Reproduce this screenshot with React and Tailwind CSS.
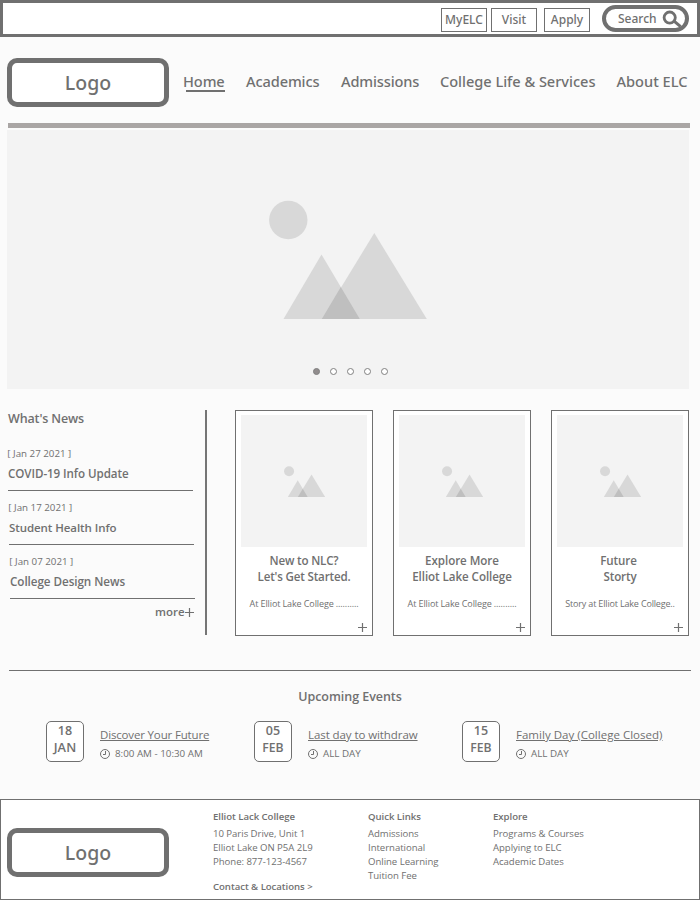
function Landscape({ className }) {
  return (
    <svg viewBox="269 200 158 119" className={className}>
      <circle cx="288.3" cy="220" r="19.2" fill="#d8d8d8" />
      <path d="M321.5 254.5 359.8 319H283.5Z" fill="#d8d8d8" />
      <path d="M374.3 233 426.8 319H321.8Z" fill="#d8d8d8" />
      <path d="M340.8 287 359.8 319H321.8Z" fill="#bfbfbf" />
    </svg>
  );
}

function Plus({ className }) {
  return (
    <svg viewBox="0 0 9 9" className={className} stroke="#707070" strokeWidth="1.2">
      <path d="M4.5 0V9M0 4.5H9" />
    </svg>
  );
}

function Logo() {
  return (
    <div className="flex h-[49px] w-[162px] shrink-0 items-center justify-center rounded-[10px] border-[5px] border-[#707070] bg-white font-['Noto_Sans',sans-serif] text-[19.5px] leading-5 font-medium">
      Logo
    </div>
  );
}

function Clock() {
  return (
    <svg viewBox="0 0 10 10" className="size-[10px]" fill="none" stroke="#707070">
      <circle cx="5" cy="5" r="4.5" strokeWidth="1" />
      <path d="M5.5 2V5.5H3" strokeWidth="1" />
    </svg>
  );
}

const nav = [
  { label: 'Home', box: 'w-[63px] tracking-[-0.1px]', active: true },
  { label: 'Academics', box: 'w-[95px] tracking-[-0.12px]' },
  { label: 'Admissions', box: 'w-[99px] tracking-[-0.14px]' },
  { label: 'College Life & Services', box: 'w-[176.5px] tracking-[-0.03px]' },
  { label: 'About ELC', box: 'w-[72px]' },
];

const news = [
  { date: '[ Jan 27 2021 ]', title: 'COVID-19 Info Update', box: 'ml-[8px]', size: 'text-[11.6px]' },
  { date: '[ Jan 17 2021 ]', title: 'Student Health Info', box: 'ml-[9px]', size: 'text-[11.5px]' },
  { date: '[ Jan 07 2021 ]', title: 'College Design News', box: 'ml-[10px]', size: 'text-[11.7px]' },
];

const cards = [
  { a: 'New to NLC?', b: "Let's Get Started.", text: 'At Elliot Lake College ..........', track: 'tracking-[-0.11px]', lead: 'tracking-[-0.18px]', shift: '' },
  { a: 'Explore More', b: 'Elliot Lake College', text: 'At Elliot Lake College ..........', track: 'tracking-[-0.11px]', lead: 'tracking-[-0.06px]', shift: '' },
  { a: 'Future', b: 'Storty', text: 'Story at Elliot Lake College..', track: 'tracking-[-0.17px]', lead: 'tracking-[-0.1px]', shift: 'pr-[3px]' },
];

const events = [
  { day: '18', month: 'JAN', title: 'Discover Your Future', time: '8:00 AM - 10:30 AM', track: 'tracking-[-0.16px]', m: 'text-[12.8px] tracking-[0.1px]' },
  { day: '05', month: 'FEB', title: 'Last day to withdraw', time: 'ALL DAY', track: 'tracking-[-0.08px]', m: 'text-[12.2px]' },
  { day: '15', month: 'FEB', title: 'Family Day (College Closed)', time: 'ALL DAY', track: 'tracking-[0.02px]', m: 'text-[12.2px]' },
];

const columns = [
  { head: 'Elliot Lack College', box: 'w-[155px]', rows: ['10 Paris Drive, Unit 1', 'Elliot Lake ON P5A 2L9', 'Phone: 877-123-4567'], more: 'Contact & Locations >' },
  { head: 'Quick Links', box: 'w-[125px]', rows: ['Admissions', 'International', 'Online Learning', 'Tuition Fee'] },
  { head: 'Explore', box: 'w-[120px]', rows: ['Programs & Courses', 'Applying to ELC', 'Academic Dates'] },
];

export default function App() {
  return (
    <div className="flex h-[900px] w-[700px] flex-col overflow-hidden bg-[#fbfbfb] font-['Open_Sans','Noto_Sans',sans-serif] whitespace-nowrap text-[#707070]">
      <div className="flex h-[37px] shrink-0 items-start justify-end border-[3px] border-[#707070] bg-white pr-[8px] font-['Noto_Sans',sans-serif] text-[12px] leading-[22px] font-medium">
        <button className="mt-[5px] h-6 w-[46px] border border-[#707070]">MyELC</button>
        <button className="mt-[5px] ml-1 h-6 w-[46px] border border-[#707070]">Visit</button>
        <button className="mt-[5px] ml-[7px] h-6 w-[46px] border border-[#707070]">Apply</button>
        <div className="mt-[2px] ml-3 flex h-[27px] w-[87px] items-center rounded-full border-4 border-[#707070] pl-[12px]">
          <span className="w-[43.5px] leading-[19px]">Search</span>
          <svg viewBox="0 0 20 18" className="h-[18px] w-5 shrink-0" fill="none" stroke="#707070">
            <circle cx="7.7" cy="7.6" r="5.6" strokeWidth="2.8" />
            <path d="M11.8 10.8 18.6 16.6" strokeWidth="3" />
          </svg>
        </div>
      </div>

      <header className="mt-[21px] flex h-[49px] shrink-0 items-center pl-[7px]">
        <Logo />
        <nav className="mb-[3px] ml-[14px] flex font-['Noto_Sans',sans-serif] text-[14.6px] leading-5 font-medium">
          {nav.map((n) => (
            <a key={n.label} className={`relative block shrink-0 ${n.box}`}>
              {n.label}
              {n.active && <span className="absolute top-[19px] left-[3px] h-[2px] w-[39px] bg-[#707070]" />}
            </a>
          ))}
        </nav>
      </header>

      <div className="mt-4 ml-[7.5px] h-[5px] w-[682px] shrink-0 bg-[#aaa6a5]" />
      <section className="mt-[2px] ml-[7px] flex h-[259px] w-[682px] shrink-0 flex-col bg-[#f3f3f3]">
        <Landscape className="mt-[70px] ml-[262px] h-[119px] w-[158px]" />
        <div className="mt-[49px] ml-[306px] flex gap-[10px]">
          {[0, 1, 2, 3, 4].map((i) => (
            <span key={i} className={`size-[7px] rounded-full border border-[#808080] ${i === 0 ? 'bg-[#918c8d]' : 'bg-white'}`} />
          ))}
        </div>
      </section>

      <section className="mt-[21px] flex h-[226px] shrink-0">
        <div className="flex w-[204.5px] flex-col font-medium">
          <h2 className="ml-[8px] h-[33px] text-[12.5px] leading-[17px] font-semibold tracking-[-0.14px]">What's News</h2>
          {news.map((n) => (
            <article key={n.title} className={`h-[54px] w-[184.5px] ${n.box}`}>
              <p className="-ml-[0.7px] pt-[3px] text-[9.75px] leading-[15px] font-normal">{n.date}</p>
              <h3 className={`h-[29px] pt-[4px] leading-[17px] font-semibold tracking-[-0.07px] ${n.size}`}>{n.title}</h3>
              <div className="-mt-[10px] h-0 translate-y-[10px] border-b border-[#707070]" />
            </article>
          ))}
          <a className="ml-[155px] flex items-center text-[11.5px] leading-[13px] font-semibold">
            more
            <Plus className="mt-px ml-[0.5px] size-[9px]" />
          </a>
        </div>
        <div className="h-[225px] w-[2px] bg-[#757575]" />
        <div className="ml-[28.5px] flex gap-5">
          {cards.map((c) => (
            <article key={c.a} className="flex h-[226px] w-[138px] flex-col items-center border border-[#707070] bg-white">
              <div className="mt-[4px] h-[132px] w-[126px] shrink-0 bg-[#f3f3f3]">
                <Landscape className="mt-[50.6px] ml-[42.6px] h-[31.1px] w-[41.3px]" />
              </div>
              <h3 className={`mt-[6px] text-center text-[11.6px] leading-4 font-semibold ${c.lead}`}>
                <span className={`block ${c.shift}`}>{c.a}</span>
                <span className="block">{c.b}</span>
              </h3>
              <p className={`mt-3 text-[9px] leading-[14px] ${c.track}`}>{c.text}</p>
              <Plus className="mt-[12px] mr-[5px] size-[9px] self-end" />
            </article>
          ))}
        </div>
      </section>

      <div className="mt-[34px] ml-[9px] h-px w-[682px] shrink-0 bg-[#707070]" />
      <section className="flex h-[128px] shrink-0 flex-col">
        <h2 className="mt-[17px] text-center text-[12.5px] leading-[17px] font-semibold tracking-[-0.05px]">Upcoming Events</h2>
        <div className="mt-[16px] ml-[46px] flex">
          {events.map((e) => (
            <div key={e.title} className="flex w-[208px]">
              <div className="flex h-[41px] w-[38px] flex-col rounded-[5px] border border-[#707070] bg-white text-center font-semibold">
                <span className="text-[12.5px] leading-[17px]">{e.day}</span>
                <span className={`leading-[17px] ${e.m}`}>{e.month}</span>
              </div>
              <div className="ml-4">
                <a className={`mt-[5px] block text-[11.5px] leading-[17px] underline underline-offset-1 ${e.track}`}>{e.title}</a>
                <div className="mt-[4px] flex items-center gap-[5px] text-[9.8px] leading-[14px]">
                  <Clock />
                  <span>{e.time}</span>
                </div>
              </div>
            </div>
          ))}
        </div>
      </section>

      <footer className="flex h-[101px] shrink-0 border border-[#707070] bg-white">
        <div className="mt-[28px] ml-[6px]">
          <Logo />
        </div>
        <div className="ml-[44px] flex text-[9.6px] leading-[14px] tracking-[-0.04px]">
          {columns.map((c) => (
            <div key={c.head} className={c.box}>
              <h4 className="mt-[10px] mb-[3px] text-[9.6px] font-semibold">{c.head}</h4>
              {c.rows.map((r) => (
                <p key={r}>{r}</p>
              ))}
              {c.more && <p className="mt-[11px] font-semibold">{c.more}</p>}
            </div>
          ))}
        </div>
      </footer>
    </div>
  );
}
